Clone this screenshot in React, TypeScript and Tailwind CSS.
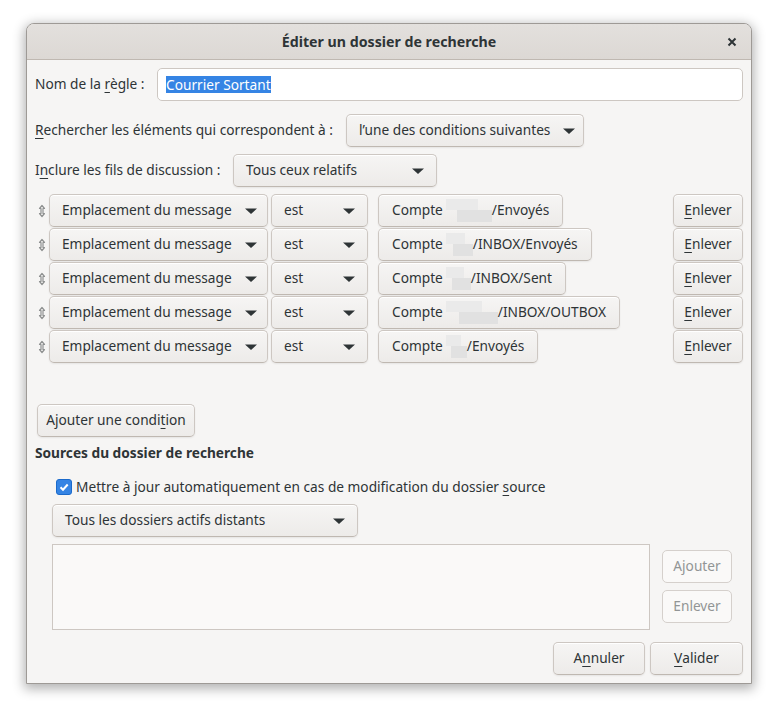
import type { ReactNode } from 'react';

const font = "font-['Noto_Sans',sans-serif]";

function Arrow() {
    return (
        <svg width="14" height="14" viewBox="0 0 14 14" className="shrink-0">
            <polygon points="1,4.5 13,4.5 7,10" fill="#2e3436" />
        </svg>
    );
}

function Handle() {
    return (
        <svg width="8" height="14" viewBox="0 0 8 14" className="shrink-0">
            <path d="M4 1.5 L6.5 4.5 H5 V9.5 H6.5 L4 12.5 L1.5 9.5 H3 V4.5 H1.5 Z" fill="none" stroke="#8f9191" strokeWidth="1.2" strokeLinejoin="round" />
        </svg>
    );
}

function Btn({ children, className = '' }: { children: ReactNode; className?: string }) {
    return (
        <button className={`h-[33px] rounded-[5px] border border-[#cdc7c2] border-b-[#bfb8b1] bg-linear-to-b from-[#f6f5f4] to-[#edebe9] shadow-[inset_0_1px_#ffffff,0_1px_2px_rgba(0,0,0,0.07)] text-[#2e3436] flex items-center shrink-0 ${className}`}>
            {children}
        </button>
    );
}

function DisabledBtn({ children }: { children: ReactNode }) {
    return (
        <button className="h-[33px] w-[70px] rounded-[5px] border border-[#d5d0cc] bg-[#faf9f8] text-[#929595] flex items-center justify-center">
            {children}
        </button>
    );
}

function Combo({ label, className = '' }: { label: string; className?: string }) {
    return (
        <Btn className={`pl-[12px] pr-[11px] justify-between gap-3 ${className}`}>
            <span className="whitespace-nowrap">{label}</span>
            <Arrow />
        </Btn>
    );
}

function Blur({ w }: { w: number }) {
    // pixelated placeholder where the account name was hidden
    return (
        <span className="inline-flex flex-col h-[26px] justify-center ml-[3px]" style={{ width: w }}>
            <span className="h-[11px] bg-[#eaeaea]" style={{ width: Math.round(w * 0.7) }} />
            <span className="h-[12px] bg-[#e1e1e1] self-end" style={{ width: Math.round(w * 0.75) }} />
        </span>
    );
}

function U({ children }: { children: ReactNode }) {
    return <span className="underline underline-offset-[3px] decoration-[1px]">{children}</span>;
}

const rules = [
    { blur: 46, path: '/Envoyés' },
    { blur: 27, path: '/INBOX/Envoyés' },
    { blur: 25, path: '/INBOX/Sent' },
    { blur: 52, path: '/INBOX/OUTBOX' },
    { blur: 21, path: '/Envoyés' },
];

export default function App() {
    return (
        <div className={`w-[778px] h-[713px] bg-white pt-[23px] pl-[26px] text-[13.7px] text-[#2e3436] ${font}`}>
            <div className="w-[726px] h-[661px] rounded-t-[8px] border border-[#9e9a96] bg-[#f6f5f4] shadow-[0_3px_12px_2px_rgba(0,0,0,0.3)] flex flex-col overflow-hidden">
                {/* titlebar */}
                <div className="h-[36px] shrink-0 bg-linear-to-b from-[#e3e0dd] to-[#dcd8d4] border-b border-[#bfb8b1] flex items-center relative">
                    <div className="flex-1 text-center font-bold text-[14.2px]">Éditer un dossier de recherche</div>
                    <svg width="10" height="10" viewBox="0 0 10 10" className="absolute right-[14px] top-[13px]">
                        <path d="M1.5 1.5 L8.5 8.5 M8.5 1.5 L1.5 8.5" stroke="#2e3436" strokeWidth="2" />
                    </svg>
                </div>

                <div className="flex-1 flex flex-col px-[8px] pb-[8px]">
                    <div className="mt-[8px] flex items-center">
                        <span className="w-[122px]">Nom de la <U>r</U>ègle :</span>
                        <div className="flex-1 h-[33px] rounded-[5px] border border-[#cdc7c2] bg-white flex items-center px-[8px]">
                            <span className="bg-[#3584e4] text-white leading-[17px]">Courrier Sortant</span>
                        </div>
                    </div>

                    <div className="mt-[13px] flex items-center">
                        <span className="w-[311px]"><U>R</U>echercher les éléments qui correspondent à :</span>
                        <Combo label="l’une des conditions suivantes" className="w-[238px]" />
                    </div>

                    <div className="mt-[7px] flex items-center">
                        <span className="w-[198px]">I<U>n</U>clure les fils de discussion :</span>
                        <Combo label="Tous ceux relatifs" className="w-[204px]" />
                    </div>

                    <div className="mt-[7px] flex flex-col gap-[1px]">
                        {rules.map((r, i) => (
                            <div key={i} className="flex items-center">
                                <div className="w-[14px] flex justify-center"><Handle /></div>
                                <Combo label="Emplacement du message" className="w-[219px]" />
                                <Combo label="est" className="w-[97px] ml-[3px]" />
                                <Btn className="ml-[10px] px-[13px]">
                                    <span>Compte</span>
                                    <Blur w={r.blur} />
                                    <span>{r.path}</span>
                                </Btn>
                                <div className="flex-1" />
                                <Btn className="w-[70px] justify-center"><U>E</U>nlever</Btn>
                            </div>
                        ))}
                    </div>

                    <Btn className="mt-[41px] ml-[2px] w-[158px] justify-center self-start">Ajouter une condi<U>t</U>ion</Btn>

                    <div className="mt-[6px] font-bold leading-[20px]">Sources du dossier de recherche</div>

                    <div className="mt-[14px] ml-[21px] flex items-center h-[20px]">
                        <span className="w-[16px] h-[16px] rounded-[3px] bg-[#3584e4] border border-[#1b6acb] flex items-center justify-center">
                            <svg width="12" height="12" viewBox="0 0 12 12">
                                <path d="M2.5 6.2 L5 8.7 L9.7 3.5" stroke="white" strokeWidth="2" fill="none" />
                            </svg>
                        </span>
                        <span className="ml-[4px]">Mettre à jour automatiquement en cas de modification du dossier <U>s</U>ource</span>
                    </div>

                    <Combo label="Tous les dossiers actifs distants" className="mt-[7px] ml-[17px] w-[306px]" />

                    <div className="mt-[7px] ml-[17px] flex">
                        <div className="w-[598px] h-[86px] border border-[#cdc7c2] bg-[#faf9f8]" />
                        <div className="ml-[12px] mt-[6px] flex flex-col gap-[7px]">
                            <DisabledBtn>Ajouter</DisabledBtn>
                            <DisabledBtn>Enlever</DisabledBtn>
                        </div>
                    </div>

                    <div className="mt-[12px] flex justify-end gap-[5px]">
                        <Btn className="w-[92px] justify-center">A<U>n</U>nuler</Btn>
                        <Btn className="w-[93px] justify-center"><U>V</U>alider</Btn>
                    </div>
                </div>
            </div>
        </div>
    );
}
